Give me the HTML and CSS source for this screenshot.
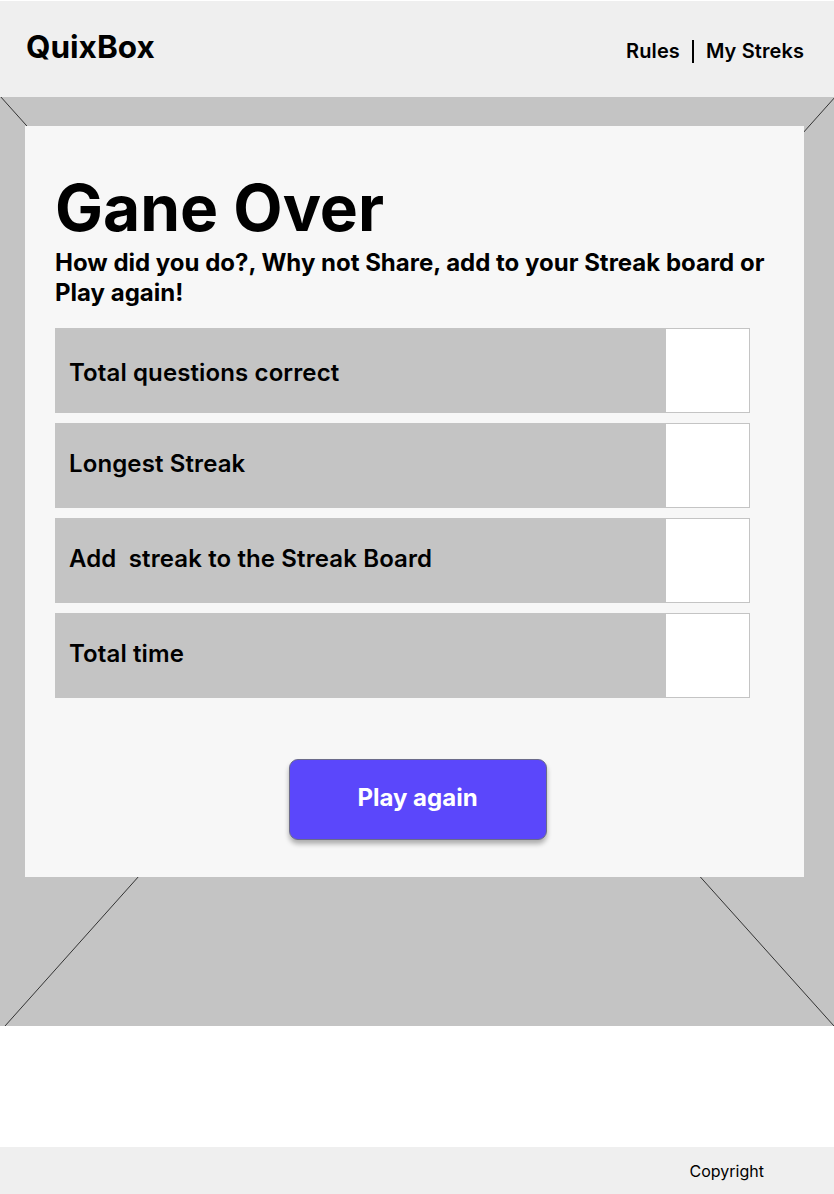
FILE: index.html
```html
<!DOCTYPE html>
<html lang="en">
<head>
<meta charset="utf-8">
<title>QuixBox - Game Over</title>
<link rel="stylesheet" href="styles.css">
</head>
<body>
<header class="topbar">
  <div class="logo">QuixBox</div>
  <nav class="nav">
    <a class="nav-link" href="#">Rules</a>
    <span class="nav-sep"></span>
    <a class="nav-link" href="#">My Streks</a>
  </nav>
</header>
<main class="hero">
  <svg class="hero-lines" viewBox="0 0 834 930" preserveAspectRatio="none" aria-hidden="true">
    <line x1="0" y1="0" x2="834" y2="930" stroke="#333" stroke-width="1"/>
    <line x1="836" y1="0" x2="5" y2="930" stroke="#333" stroke-width="1"/>
  </svg>
  <section class="card">
    <h1 class="title">Gane Over</h1>
    <p class="subtitle">How did you do?, Why not Share, add to your Streak board or Play again!</p>
    <div class="rows">
      <div class="row"><div class="row-label">Total questions correct</div><div class="row-value"></div></div>
      <div class="row"><div class="row-label">Longest Streak</div><div class="row-value"></div></div>
      <div class="row"><div class="row-label">Add&nbsp; streak to the Streak Board</div><div class="row-value"></div></div>
      <div class="row"><div class="row-label">Total time</div><div class="row-value"></div></div>
    </div>
    <div class="actions">
      <button class="btn-play">Play again</button>
    </div>
  </section>
</main>
<footer class="footer">
  <span class="copyright">Copyright</span>
</footer>
</body>
</html>
```
FILE: styles.css
```css
* { box-sizing: border-box; }
html, body { margin: 0; padding: 0; }
body {
  font-family: Inter, "Noto Sans", sans-serif;
  color: #000;
  background: #fff;
  width: 834px;
  height: 1194px;
}
.topbar {
  height: 96px;
  margin-top: 1px;
  background: #efefef;
  display: flex;
  align-items: center;
  justify-content: space-between;
  padding: 0 30px 0 26px;
}
.logo {
  font-size: 31.5px;
  font-weight: 700;
  letter-spacing: 0;
  margin-top: -6px;
}
.nav {
  display: flex;
  align-items: center;
  gap: 12px;
  margin-top: 4px;
}
.nav-link {
  color: #000;
  text-decoration: none;
  font-size: 20px;
  font-weight: 600;
  letter-spacing: 0.1px;
}
.nav-sep {
  width: 2px;
  height: 23px;
  background: #000;
}
.hero {
  position: relative;
  height: 929px;
  background: #c4c4c4;
  padding: 29px 30px 0 25px;
  overflow: hidden;
}
.hero-lines {
  position: absolute;
  left: 0;
  top: -1px;
  width: 834px;
  height: 930px;
}
.card {
  position: relative;
  width: 779px;
  height: 751px;
  background: #f7f7f7;
  padding: 44px 30px 0 30px;
}
.title {
  margin: 0;
  font-size: 64px;
  font-weight: 700;
  line-height: 76px;
  letter-spacing: 0;
}
.subtitle {
  margin: 2px 0 0;
  font-size: 24px;
  font-weight: 700;
  line-height: 30px;
  width: 720px;
}
.rows {
  margin-top: 20px;
  width: 695px;
  display: flex;
  flex-direction: column;
  gap: 10px;
}
.row {
  display: flex;
  height: 85px;
}
.row-label {
  flex: 1;
  background: #c4c4c4;
  display: flex;
  align-items: center;
  padding: 0 0 5px 14px;
  font-size: 24px;
  font-weight: 600;
  letter-spacing: 0.12px;
}
.row:first-child .row-label {
  padding: 3px 0 0 14px;
}
.row-value {
  width: 85px;
  background: #fff;
  border: 1px solid #c4c4c4;
}
.actions {
  display: flex;
  justify-content: center;
  margin-top: 61px;
  padding-left: 6px;
}
.btn-play {
  width: 258px;
  height: 81px;
  padding-bottom: 5px;
  background: #5b47fb;
  color: #fff;
  border: 1px solid #6b6b8a;
  border-radius: 9px;
  box-shadow: 0 4px 5px rgba(0, 0, 0, 0.3);
  font-family: Inter, "Noto Sans", sans-serif;
  font-size: 24px;
  font-weight: 700;
  cursor: pointer;
}
.footer {
  margin-top: 121px;
  height: 47px;
  background: #efefef;
  display: flex;
  align-items: center;
  justify-content: flex-end;
  padding-right: 70px;
}
.copyright {
  font-size: 16px;
  font-weight: 400;
}
```
